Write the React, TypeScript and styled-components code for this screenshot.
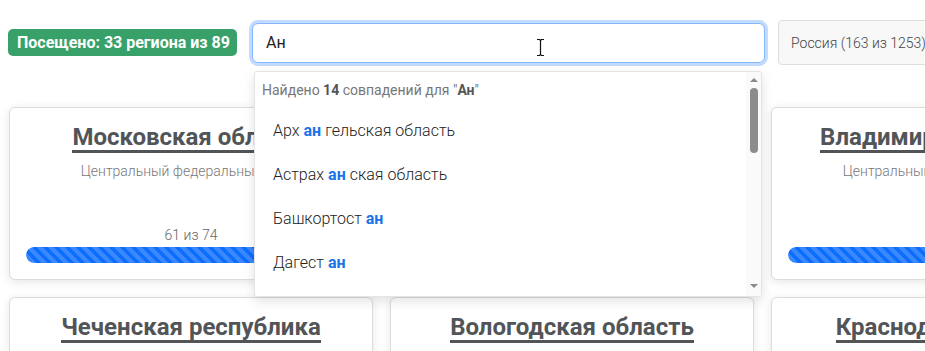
import React from 'react';
import styled, { createGlobalStyle } from 'styled-components';

const GlobalStyle = createGlobalStyle`
  html, body {
    margin: 0;
    padding: 0;
    background: #fff;
    overflow: hidden;
  }
  body {
    font-family: Roboto, 'Noto Sans', 'Liberation Sans', sans-serif;
    color: #333;
  }
  * {
    box-sizing: border-box;
  }
`;

const Page = styled.div`
  width: 1200px;
  padding: 20px 0 0 8px;
`;

const TopBar = styled.div`
  display: flex;
  align-items: center;
  height: 45px;
`;

const VisitedBadge = styled.div`
  width: 229px;
  height: 27px;
  line-height: 27px;
  padding: 0 9px;
  border-radius: 5px;
  background: #38a169;
  color: #fff;
  font-size: 16px;
  font-weight: 700;
  white-space: nowrap;
`;

const SearchWrap = styled.div`
  position: relative;
  width: 513px;
  margin-left: 15px;
  z-index: 10;
`;

const SearchInput = styled.input`
  display: block;
  width: 100%;
  height: 40px;
  padding: 0 13px;
  border: 1px solid #86b7fe;
  border-radius: 6px;
  box-shadow: 0 0 0 3px rgba(13, 110, 253, 0.25);
  outline: none;
  font-family: inherit;
  font-size: 16px;
  color: #222;
  background: #fff;
`;

const MouseCursor = styled.svg`
  position: absolute;
  left: 283px;
  top: 15px;
  pointer-events: none;
`;

const Suggestions = styled.div`
  position: absolute;
  top: 48px;
  left: 2px;
  right: 3px;
  height: 226px;
  display: flex;
  overflow: hidden;
  background: #fff;
  border: 1px solid #e4e4e4;
  border-radius: 3px;
  box-shadow: 0 4px 12px rgba(0, 0, 0, 0.12);
`;

const SuggestionsList = styled.div`
  flex: 1;
  min-width: 0;
  overflow: hidden;
`;

const ScrollTrack = styled.div`
  width: 15px;
  flex-shrink: 0;
  display: flex;
  flex-direction: column;
  align-items: center;
  background: #fafafa;
`;

const ScrollArrow = styled.div<{ $dir: 'up' | 'down' }>`
  width: 0;
  height: 0;
  margin: ${(p) => (p.$dir === 'up' ? '6px 0 0' : 'auto 0 8px')};
  border-left: 4.5px solid transparent;
  border-right: 4.5px solid transparent;
  ${(p) =>
    p.$dir === 'up'
      ? 'border-bottom: 4px solid #8a8a8a;'
      : 'border-top: 4px solid #8a8a8a;'}
`;

const ScrollThumb = styled.div`
  width: 8px;
  height: 65px;
  margin-top: 6px;
  border-radius: 4px;
  background: #8c8c8c;
`;

const SuggestionsHeader = styled.div`
  padding: 10px 7px;
  line-height: 17px;
  font-size: 14px;
  color: #777;

  b {
    font-weight: 700;
    color: #555;
  }
`;

const SuggestionItem = styled.div`
  padding: 12px 18px;
  line-height: 20px;
  font-size: 16px;
  font-weight: 300;
  color: #222;
  white-space: nowrap;
`;

const Match = styled.span`
  margin: 0 4px;
  font-weight: 700;
  color: #1a73e8;
`;

const CountrySelect = styled.div`
  width: 220px;
  height: 45px;
  margin-left: 13px;
  padding: 0 12px;
  display: flex;
  align-items: center;
  background: #f8f8f8;
  border: 1px solid #dedede;
  border-radius: 4px;
  font-size: 14px;
  font-weight: 300;
  color: #444;
  white-space: nowrap;
`;

const CardGrid = styled.div`
  display: grid;
  grid-template-columns: repeat(3, 364px);
  gap: 17px;
  margin: 42px 0 0 1px;
`;

const RegionCard = styled.div`
  display: flex;
  flex-direction: column;
  align-items: center;
  min-height: 173px;
  padding: 16px;
  border: 1px solid #dcdcdc;
  border-radius: 6px;
  background: #fff;
  box-shadow: 0 2px 10px rgba(0, 0, 0, 0.1);
`;

const RegionTitle = styled.a`
  font-size: 24px;
  line-height: 26px;
  font-weight: 700;
  color: #525558;
  text-decoration: none;
  border-bottom: 3px solid #525558;
  white-space: nowrap;
`;

const District = styled.div`
  margin-top: 8px;
  line-height: 20px;
  font-size: 14px;
  font-weight: 300;
  color: #777;
  white-space: nowrap;
`;

const Count = styled.div`
  margin-top: auto;
  line-height: 20px;
  font-size: 14px;
  font-weight: 300;
  color: #666;
`;

const Track = styled.div`
  width: 100%;
  height: 16px;
  margin-top: 2px;
  border-radius: 8px;
  background: #e9ecef;
  overflow: hidden;
`;

const Fill = styled.div`
  height: 100%;
  border-radius: 8px;
  background-color: #0d6efd;
  background-image: linear-gradient(
    45deg,
    rgba(255, 255, 255, 0.18) 25%,
    transparent 25%,
    transparent 50%,
    rgba(255, 255, 255, 0.18) 50%,
    rgba(255, 255, 255, 0.18) 75%,
    transparent 75%,
    transparent
  );
  background-size: 11px 11px;
`;

const query = 'Ан';

const matches = [
  'Архангельская область',
  'Астраханская область',
  'Башкортостан',
  'Дагестан',
  'Еврейская автономная область',
  'Ивановская область',
  'Курганская область',
  'Магаданская область',
  'Мурманская область',
  'Рязанская область',
  'Санкт-Петербург',
  'Татарстан',
  'Ханты-Мансийский автономный округ',
  'Ульяновская область',
];

const regions = [
  { name: 'Московская область', district: 'Центральный федеральный округ', visited: 61, total: 74 },
  { name: 'Ленинградская область', district: 'Северо-Западный федеральный округ', visited: 12, total: 29 },
  { name: 'Владимирская область', district: 'Центральный федеральный округ', visited: 16, total: 16 },
  { name: 'Чеченская республика', district: 'Северо-Кавказский федеральный округ', visited: 3, total: 17 },
  { name: 'Вологодская область', district: 'Северо-Западный федеральный округ', visited: 5, total: 28 },
  { name: 'Краснодарский край', district: 'Южный федеральный округ', visited: 20, total: 49 },
];

function highlight(name: string) {
  const i = name.toLowerCase().indexOf(query.toLowerCase());
  if (i < 0) return name;
  return (
    <>
      {name.slice(0, i)}
      <Match>{name.slice(i, i + query.length)}</Match>
      {name.slice(i + query.length)}
    </>
  );
}

export default function App() {
  return (
    <>
      <GlobalStyle />
      <Page>
        <TopBar>
          <VisitedBadge>Посещено: 33 региона из 89</VisitedBadge>
          <SearchWrap>
            <SearchInput value={query} readOnly />
            <MouseCursor width="11" height="19" viewBox="0 0 11 19">
              <path
                d="M2 1.5h2.5l1 1 1-1H9M2 17.5h2.5l1-1 1 1H9M5.5 2.5v14"
                fill="none"
                stroke="#fff"
                strokeWidth="3"
              />
              <path
                d="M2 1.5h2.5l1 1 1-1H9M2 17.5h2.5l1-1 1 1H9M5.5 2.5v14"
                fill="none"
                stroke="#111"
                strokeWidth="1.2"
              />
            </MouseCursor>
            <Suggestions>
              <SuggestionsList>
                <SuggestionsHeader>
                  Найдено <b>{matches.length}</b> совпадений для "<b>{query}</b>"
                </SuggestionsHeader>
                {matches.map((m) => (
                  <SuggestionItem key={m}>{highlight(m)}</SuggestionItem>
                ))}
              </SuggestionsList>
              <ScrollTrack>
                <ScrollArrow $dir="up" />
                <ScrollThumb />
                <ScrollArrow $dir="down" />
              </ScrollTrack>
            </Suggestions>
          </SearchWrap>
          <CountrySelect>Россия (163 из 1253)</CountrySelect>
        </TopBar>
        <CardGrid>
          {regions.map((r) => (
            <RegionCard key={r.name}>
              <RegionTitle href="#">{r.name}</RegionTitle>
              <District>{r.district}</District>
              <Count>
                {r.visited} из {r.total}
              </Count>
              <Track>
                <Fill style={{ width: `${(r.visited / r.total) * 100}%` }} />
              </Track>
            </RegionCard>
          ))}
        </CardGrid>
      </Page>
    </>
  );
}
